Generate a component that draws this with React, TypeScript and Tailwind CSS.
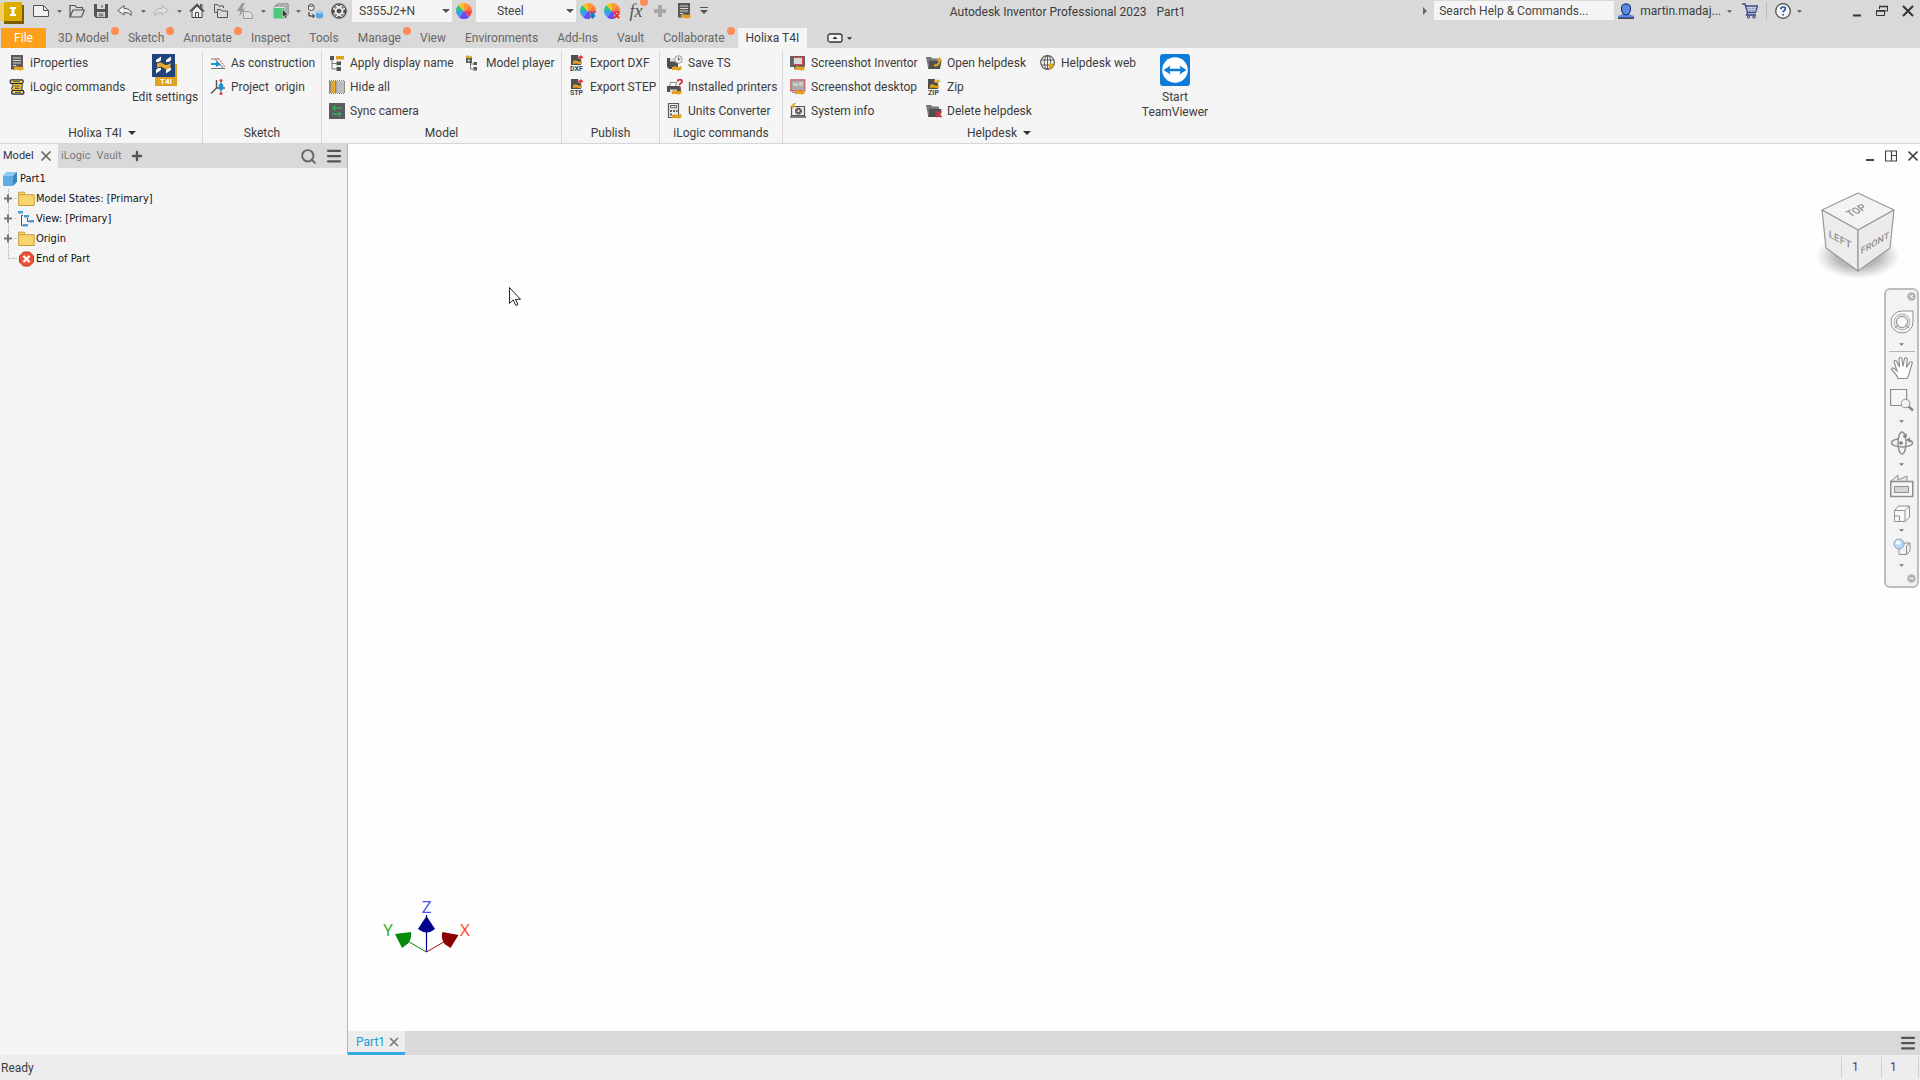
import React from 'react';
import { Plus, Search, Menu } from 'lucide-react';

type IconProps = { children: React.ReactNode; className?: string; box?: string };

function Svg({ children, className = 'size-4', box = '0 0 16 16' }: IconProps) {
  return (
    <svg viewBox={box} className={`shrink-0 ${className}`} fill="none" aria-hidden="true">
      {children}
    </svg>
  );
}

function Caret({ className = 'w-2 h-2', color = '#555' }: { className?: string; color?: string }) {
  return (
    <Svg box="0 0 8 8" className={className}>
      <path d="M0 2h8L4 6z" fill={color} />
    </Svg>
  );
}

const swoosh = <path d="M5 12.5q2-2 4.500-.8t5-.7v3.500q-2 1.500-5 .6T5 15.500z" fill="#e0a020" />;

// ---------- quick access icons ----------

const AppLogo = () => (
  <Svg box="0 0 24 24" className="size-6">
    <path d="M4 5h20v19H4z" fill="#7d5d00" />
    <path d="M0 3h5v18H0z" fill="#f0cf60" />
    <path d="M4 2h18v19H4z" fill="#dcab00" />
    <path d="M10 7h6v2h-1.500v5H16v2h-6v-2h1.500V9H10z" fill="#fff" />
  </Svg>
);

const NewFile = () => (
  <Svg box="0 0 18 16" className="w-[18px] h-4">
    <path d="M1.500 2.500h10l5 5v6h-15z" fill="#f2f2f2" stroke="#555" />
    <path d="M11.500 2.500v5h5" stroke="#555" />
  </Svg>
);

const OpenFolder = () => (
  <Svg>
    <path d="M1 14V2.500h5l1.500 2h6V7M1 14h11.500L15.500 7H4z" stroke="#555" strokeWidth="1.200" />
  </Svg>
);

const SaveDisk = () => (
  <Svg>
    <path d="M1 1h14v14H3l-2-2z" fill="#555" />
    <path d="M4 1h8v5H4zM4 9h8v5H4z" fill="#d9d9d9" />
    <path d="M5.500 11h5M5.500 12.800h5M9 2v3" stroke="#555" />
  </Svg>
);

const Undo = ({ faded = false }: { faded?: boolean }) => (
  <Svg className={faded ? 'size-4 -scale-x-100 opacity-30' : 'size-4'}>
    <path d="M7 2.500.8 7.500l6.200 4.500v-2.500q5.500-.5 7 3 1.500-4-2-6-2-1-5-1z" fill="#eee" stroke="#555" />
  </Svg>
);

const Home = () => (
  <Svg>
    <path d="M3 8 8 3l5 5v6.500H3z" fill="#f2f2f2" stroke="#444" />
    <path d="M.8 8.500 8 1.500l7.200 7" stroke="#444" strokeWidth="1.300" />
    <path d="M11.500 4V1.500H13v4" stroke="#444" />
    <path d="M6.500 14.500v-5h3v5" stroke="#444" />
  </Svg>
);

const Folders = () => (
  <Svg>
    <path d="M1.500 9.500v-8h3l1 1.500h5v2M4.500 14.500v-8h3l1 1.500h6v6.500zM1.500 9.500h3" stroke="#555" />
  </Svg>
);

const Lightning = () => (
  <Svg>
    <path d="M5 0 0 8h3.500L2 14l6-8.500H5L8 0z" fill="#999" />
    <path d="M6.500 8.500h6l3 3v4h-9z" fill="#ddd" stroke="#999" />
  </Svg>
);

const SelectCube = () => (
  <Svg>
    <path d="M1 4.500 4.500 1H15v11l-3 3" fill="#e6e6e6" stroke="#555" strokeWidth=".8" />
    <path d="M2.500 3h10.500v10" stroke="#555" strokeWidth=".8" />
    <path d="M.5 5h11v10.500H.5z" fill="#4cc97a" />
    <path d="m9.500 6 5.500 6h-2.300l1.300 3-1.500.6-1.300-3-1.700 1.400z" fill="#333" stroke="#eee" strokeWidth=".5" />
  </Svg>
);

const Convert = () => (
  <Svg>
    <path d="M1.500 2.500v4q2.500 2 5.500 0v-4M1.500 2.500q2.700-3 5.500 0-2.700 2-5.500 0" fill="#eee" stroke="#555" />
    <path d="M2 9v4h5M5.500 11l2 2-2 2" stroke="#222" />
    <path d="M9 9q3.500-2.500 7 0v5.500q-3.500 2-7 0z" fill="#5aa5dd" />
    <ellipse cx="12.500" cy="9.200" rx="3.500" ry="1.300" fill="#9fd0f2" />
  </Svg>
);

const Ball = () => (
  <Svg>
    <circle cx="8" cy="8" r="7.200" fill="#eee" stroke="#4a4a4a" strokeWidth="1.300" />
    <path d="m8 5.500 2.300 1.300v2.500L8 10.500 5.700 9.300V6.800z" fill="#4a4a4a" />
    <path d="M5 1.500 8 3.200l3-1.700M1 6l2.700 1v3L1.300 11M15 6l-2.700 1v3l2.400 1M5 14.800l3-2 3 2" fill="#4a4a4a" />
    <path d="m3 3.500 1.500-.8L6 4.500 4.500 6 3 5zM13 3.500l-1.500-.8L10 4.500 11.500 6 13 5zM3 12.500l.5-1.500L5 10.500l1.300 1.500L5 13.500zM13 12.500l-.5-1.500-1.500-.5L9.700 12l1.300 1.500z" fill="#888" />
  </Svg>
);

function Wheel({ mark }: { mark?: 'down' | 'x' }) {
  return (
    <Svg>
      <path d="M8 8V0a8 8 0 0 1 5.700 2.300z" fill="#ff9a2e" />
      <path d="M8 8 13.700 2.300A8 8 0 0 1 16 8z" fill="#ff7a3a" />
      <path d="M8 8h8a8 8 0 0 1-3 6.200z" fill="#f0414f" />
      <path d="m8 8 5 6.200A8 8 0 0 1 3 14.200z" fill="#6a4cf5" />
      <path d="m8 8-5 6.200A8 8 0 0 1 0 8z" fill="#3b9df0" />
      <path d="M8 8H0a8 8 0 0 1 2.300-5.700z" fill="#2fc285" />
      <path d="M8 8 2.300 2.300A8 8 0 0 1 8 0z" fill="#f2c22f" />
      {mark && <path d="M10 10h6v6h-6z" fill="#d9d9d9" />}
      {mark === 'down' && <path d="M10.500 9.500h4v3H16L12.500 16 9 12.500h1.500z" fill="#1679c9" />}
      {mark === 'x' && <path d="m10.200 10.200 5 5m0-5-5 5" stroke="#e0252d" strokeWidth="1.800" />}
    </Svg>
  );
}

const Page = () => (
  <Svg>
    <path d="M2 0h12v12H2z" fill="#5a5a5a" />
    <path d="M4 3h8M4 5.500h8M4 8h8M4 10.500h3" stroke="#d4d4d4" />
    <path d="M2 12h3v2.500H2z" fill="#5a5a5a" />
    {swoosh}
  </Svg>
);

// ---------- ribbon icons ----------

const Scroll = () => (
  <Svg>
    <path d="M2.500 4.500 4 6.500 2.500 9.500l1.500 3h10L12.500 9l1-2.500-1-2z" fill="#f3be2e" stroke="#1d2c4d" />
    <path d="M2 .8h11.500q1.500 1.800 0 3.700H2Q.2 2.600 2 .8zM3.500 11.500H14q1.800 1.900 0 3.700H3.500q-1.800-1.800 0-3.700z" fill="#f7cf55" stroke="#1d2c4d" strokeWidth="1.200" />
    <path d="M5.500 7h5M5.500 9.300h5M4 2.700h7M6 13.300h6" stroke="#1d2c4d" strokeWidth=".8" />
  </Svg>
);

const Construction = () => (
  <Svg>
    <path d="M1 4h8M1 13.500h14" stroke="#777" />
    <path d="m8 3 7 9" stroke="#d44" strokeDasharray="2 1" />
    <path d="m5 4 8 9" stroke="#777" />
    <path d="M1 8h5V6l5 3.500L6 12v-2H1z" fill="#1b95d3" />
  </Svg>
);

const Origin = () => (
  <Svg>
    <path d="M6.500 1v8M6.500 9 1 14.500M6.500 9H15" stroke="#555" strokeWidth="1.400" />
    <path d="M11 3v10M9 6l2-2 2 2-1 5h-2z" stroke="#1b95d3" fill="#1b95d3" />
    <circle cx="11" cy="1.500" r="1.500" fill="#dd3b3b" />
    <circle cx="11" cy="14.500" r="1.500" fill="#dd3b3b" />
  </Svg>
);

const TreeName = () => (
  <Svg>
    <path d="M1 1h4v4H1zM7.500 6.500H12v3.800H7.500zM7.500 12H12v4H7.500z" fill="#555" />
    <path d="M3 5v9h5M3 8.500h5" stroke="#777" />
    <path d="M7 1h8v3.500H7z" fill="#e0a020" />
  </Svg>
);

const HideAll = () => (
  <Svg>
    <path d="M0 1h16v14H0z" fill="#8b8b8b" />
    <path d="M2 2h4v12H2z" fill="#e5a823" />
    <path d="M7.500 2H15v12H7.500z" fill="#bdbdbd" />
    <path d="M1 1.500h15M1 14.500h15" stroke="#f5f5f5" strokeDasharray="1 1" />
  </Svg>
);

const SyncCamera = () => (
  <Svg>
    <path d="M0 0h16v16H0z" fill="#5c5c5c" />
    <path d="M13 5H4m2.500-2.500L4 5l2.500 2.500M3 11h9M9.500 8.500 12 11l-2.500 2.500" stroke="#2fae58" strokeWidth="1.300" />
  </Svg>
);

const Player = () => (
  <Svg>
    <path d="M1 1q2-1.500 3 0t3-.5V3H1z" fill="#e0a020" />
    <path d="M1 3h6v5H1zM8.500 7H12v3H8.500zM8.500 12H12v3.500H8.500z" fill="#5a5a5a" />
    <path d="m3 4 2.500 1.500L3 7z" fill="#ddd" />
    <path d="M5.500 8v6h3M5.500 9h3" stroke="#777" />
  </Svg>
);

function ExportIcon({ label, arrow = '#dd3340' }: { label: string; arrow?: string }) {
  return (
    <Svg className="size-4 overflow-visible">
      <path d="M2 0h7v3.500h3V10H2z" fill="#4d4d4d" />
      <path d="M8 1.500h3V0l3.500 2.300L11 4.500V3H8z" fill={arrow} />
      <path d="M4 6q2.500-1.500 4.500 0t4.500-.5v3q-1.500 1.200-4.200.3T4 9.500z" fill="#e0a020" />
      <text x="7.500" y="16" textAnchor="middle" fontSize="7" fontWeight="700" fill="#444" fontFamily="Roboto, sans-serif">{label}</text>
    </Svg>
  );
}

const SaveTs = () => (
  <Svg>
    <path d="M0 3h11v11H2l-2-2z" fill="#505050" />
    <path d="M3 3h5v3.500H3z" fill="#ddd" />
    <circle cx="11.500" cy="4.500" r="3.800" fill="#f0f0f0" stroke="#999" />
    <path d="M11.500 2v3l2-1" stroke="#666" />
    {swoosh}
  </Svg>
);

const Printer = () => (
  <Svg>
    <path d="M3.500 3.500h6l-1 4h-6z" fill="#fff" stroke="#888" />
    <path d="M0 7h13l1 3.500V13H0z" fill="#505050" />
    <path d="M3 10.500h7V14H3z" fill="#ddd" />
    <path d="M10.500 2.500q.2-2 2.300-2t2.200 2q0 1.200-1.500 2-.8.500-.8 1.500M12.700 7.500v2" stroke="#d82a3a" strokeWidth="1.800" />
    {swoosh}
  </Svg>
);

const Calculator = () => (
  <Svg>
    <path d="M1.500.5h10v14h-10z" fill="#eee" stroke="#5a5a5a" strokeWidth="1.200" />
    <path d="M3.500 2.500h6v2.300h-6z" stroke="#5a5a5a" />
    <path d="M3 7h2v2H3zM6 7h2v2H6zM9 7h1.500v2H9zM3 10.500h2v2H3z" fill="#5a5a5a" />
    {swoosh}
  </Svg>
);

const ShotInventor = () => (
  <Svg>
    <path d="M0 1h15v11H0zM4 12h6v2H4z" fill="#626262" />
    <path d="M3.500 2.500h9v7h-9z" fill="#d9d9d9" stroke="#d44" />
    {swoosh}
  </Svg>
);

const ShotDesktop = () => (
  <Svg>
    <path d="M.8.800h14v11H.8z" fill="#aaa" stroke="#cf5b5b" strokeWidth="1.200" />
    <path d="M2 13.500h8" stroke="#999" />
    <path d="M3 4h5v3H3zM9 3h4v4H9z" fill="#ccc" />
    {swoosh}
  </Svg>
);

const SystemInfo = () => (
  <Svg>
    <path d="M1.500 3.500h13v9h-13z" fill="#eee" stroke="#555" strokeWidth="1.200" />
    <path d="M0 14h16" stroke="#555" strokeWidth="1.500" />
    <circle cx="8.500" cy="8" r="2.700" stroke="#444" strokeWidth="1.800" strokeDasharray="1.600 .5" />
    <circle cx="8.500" cy="8" r="1.700" stroke="#444" />
    <path d="M4 0 0 4h2.500L1 7l4.500-4.500H3.500L6 0z" fill="#e0a020" />
  </Svg>
);

const HelpFolder = ({ remove = false }: { remove?: boolean }) => (
  <Svg>
    <path d="M0 2h5l1.500 1.500H13V6H3.500L2 12z" fill="#777" />
    <path d="M3 6h12.500L14 14H2z" fill="#505050" />
    {remove
      ? <path d="m10 8.500 5.500 5.500m0-5.500L10 14" stroke="#d8363f" strokeWidth="1.800" />
      : <path d="M8 9.500q4.500 0 4.500-4H10.500L13.500 2l3 3.500h-2q0 6-6.500 6z" fill="#e5a823" />}
  </Svg>
);

const Web = () => (
  <Svg>
    <circle cx="7.500" cy="7.500" r="6.800" stroke="#5a5a5a" strokeWidth="1.200" />
    <ellipse cx="7.500" cy="7.500" rx="3.200" ry="6.800" stroke="#5a5a5a" />
    <path d="M1 5h13M1 10h13M7.500 1v13" stroke="#5a5a5a" />
    <path d="M8.500 8.500h4.500v3.500l-1.500-.5-1 3.500-1.500-.5.500-3-1 .5z" fill="#e5a823" />
  </Svg>
);

const T4iLogo = () => (
  <Svg box="0 0 26 32" className="w-[26px] h-8">
    <path d="M3 10h22v22H3z" fill="#e0a020" />
    <path d="M0 0h23v23H0z" fill="#1f437d" />
    <path d="M4 8V6l5-3.500v3.800L6.500 8zM14 8V6l5-3.500v3.800L16.500 8zM4 19.500v-3.800L6.500 14H9v2zM14 19.500v-3.800l2.500-1.700H19v2z" fill="#fff" />
    <path d="M5 9.500q3.500-2 6.500.5t7-1v4.500q-4 3-7 .5T5 14z" fill="#f0a828" />
    <text x="14" y="30" textAnchor="middle" fontSize="8" fontWeight="700" fill="#fff" fontFamily="Roboto, sans-serif">T4I</text>
  </Svg>
);

const TeamViewer = () => (
  <Svg box="0 0 32 32" className="size-8">
    <rect x="1" y="0" width="30" height="32" rx="3" fill="#0d7cd9" />
    <circle cx="16" cy="16" r="12.800" fill="#fff" />
    <path d="m4.500 16 7-4.500-1 3.300h11l-1-3.300 7 4.500-7 4.500 1-3.300h-11l1 3.300z" fill="#0d7cd9" />
  </Svg>
);

// ---------- building blocks ----------

function QuickButton({ label, children }: { label: string; children: React.ReactNode }) {
  return (
    <button type="button" aria-label={label} className="relative flex h-[22px] w-6 items-center justify-center">
      {children}
    </button>
  );
}

function QuickCaret({ label, narrow = false }: { label: string; narrow?: boolean }) {
  return (
    <button type="button" aria-label={label} className={`flex h-[22px] items-center justify-center ${narrow ? 'w-2.5' : 'w-3'}`}>
      <Caret className="size-[5px]" />
    </button>
  );
}

function Cmd({ icon, label }: { icon: React.ReactNode; label: string }) {
  return (
    <button type="button" className="flex h-6 items-center gap-[5px] whitespace-nowrap">
      {icon}
      <span>{label}</span>
    </button>
  );
}

function Panel({ title, width, menu = false, last = false, children }: {
  title: string; width: string; menu?: boolean; last?: boolean; children: React.ReactNode;
}) {
  return (
    <section className={`flex shrink-0 flex-col ${last ? '' : 'border-r border-[#d6d6d6]'} ${width}`}>
      <div className="flex h-[72px] items-start pl-[7px]">{children}</div>
      <h2 className="flex h-5 items-center justify-center gap-1.5">
        {title}
        {menu && <Caret color="#333" />}
      </h2>
    </section>
  );
}

const tabs = [
  { name: '3D Model', dot: true },
  { name: 'Sketch', dot: true },
  { name: 'Annotate', dot: true },
  { name: 'Inspect' },
  { name: 'Tools' },
  { name: 'Manage', dot: true },
  { name: 'View' },
  { name: 'Environments' },
  { name: 'Add-Ins' },
  { name: 'Vault' },
  { name: 'Collaborate', dot: true },
];

function TitleBar() {
  return (
    <header className="flex h-6 items-start">
      <AppLogo />
      <div className="flex items-start pl-[5px]">
        <QuickButton label="New"><NewFile /></QuickButton>
        <QuickCaret label="New options" />
        <QuickButton label="Open"><OpenFolder /></QuickButton>
        <QuickButton label="Save"><SaveDisk /></QuickButton>
        <QuickButton label="Undo"><Undo /></QuickButton>
        <QuickCaret label="Undo options" />
        <QuickButton label="Redo"><Undo faded /></QuickButton>
        <QuickCaret label="Redo options" />
        <QuickButton label="Home"><Home /></QuickButton>
        <QuickButton label="Projects"><Folders /></QuickButton>
        <QuickButton label="Update"><Lightning /></QuickButton>
        <QuickCaret label="Update options" />
        <QuickButton label="Select"><SelectCube /></QuickButton>
        <QuickCaret label="Select options" narrow />
        <QuickButton label="Replace"><Convert /></QuickButton>
        <QuickButton label="Material"><Ball /></QuickButton>
        <div className="relative ml-px">
          <select aria-label="Material" className="block h-[22px] w-[100px] appearance-none bg-[#f5f5f5] pl-[7px] text-[#444]">
            <option>S355J2+N</option>
          </select>
          <span className="pointer-events-none absolute right-0.5 top-[7px]"><Caret /></span>
        </div>
        <QuickButton label="Appearance"><Wheel /></QuickButton>
        <div className="relative">
          <select aria-label="Appearance" className="block h-[22px] w-[100px] appearance-none bg-[#f5f5f5] pl-[21px] text-[#444]">
            <option>Steel</option>
          </select>
          <span className="pointer-events-none absolute right-0.5 top-[7px]"><Caret /></span>
        </div>
        <QuickButton label="Adjust"><Wheel mark="down" /></QuickButton>
        <QuickButton label="Clear"><Wheel mark="x" /></QuickButton>
        <QuickButton label="Parameters">
          <span className="font-['Liberation_Serif',serif] text-lg leading-none text-[#555] italic">fx</span>
          <span className="absolute -top-0.5 right-0 size-2 rounded-full bg-[#ff8c55]" />
        </QuickButton>
        <QuickButton label="Add">
          <Svg><path d="M6 2h4v4h4v4h-4v4H6v-4H2V6h4z" fill="#a8a8a8" /></Svg>
        </QuickButton>
        <QuickButton label="iProperties"><Page /></QuickButton>
        <button type="button" aria-label="Customize" className="flex h-[22px] w-4 items-center justify-center">
          <Svg box="0 0 8 8" className="size-2"><path d="M0 .5h8" stroke="#555" /><path d="M0 3h8L4 7z" fill="#555" /></Svg>
        </button>
      </div>

      <h1 className="flex h-6 flex-1 items-center justify-center gap-2.5 whitespace-nowrap">
        <span>Autodesk Inventor Professional 2023</span>
        <span>Part1</span>
      </h1>

      <div className="flex h-[22px] items-center">
        <Svg box="0 0 5 8" className="mr-1.5 h-2 w-[5px]"><path d="M0 0v8l4-4z" fill="#666" /></Svg>
        <input aria-label="Search Help & Commands" placeholder="Search Help & Commands..." className="mt-px h-[19px] w-[180px] self-start bg-[#f5f5f5] pl-[5px] placeholder:text-[#444]" />
        <button type="button" className="ml-1 flex items-center gap-1.5">
          <Svg>
            <path d="M0 15v-2q3-1 5-2-2-2-2-6 0-4.500 5-4.500T13 5q0 4-2 6 2 1 5 2v2z" fill="#5b8ae6" />
            <path d="M0 15.200h16" stroke="#222" strokeWidth="1.200" />
            <path d="M5 11q3 2 6 0M3.500 6q-.5-5 4.500-5t4.500 5q0 3-2 5M3.500 6q0 3 2 5" stroke="#1f2b55" />
          </Svg>
          <span>martin.madaj...</span>
          <Caret className="size-[5px]" />
        </button>
        <button type="button" aria-label="Store" className="ml-2.5">
          <Svg>
            <path d="M0 1h3l2.500 8.500h8L15.500 3H4M5.500 9.500 4.500 12H14" stroke="#35458a" strokeWidth="1.300" />
            <path d="M5 5.500h9M6 7.500h8M8 3v6M11 3v6" stroke="#8d97b8" strokeWidth=".7" />
            <circle cx="6.500" cy="14" r="1.200" stroke="#35458a" />
            <circle cx="12" cy="14" r="1.200" stroke="#35458a" />
          </Svg>
        </button>
        <span className="mx-2 h-[18px] w-px bg-[#bbb]" />
        <button type="button" aria-label="Help" className="mr-1.5 flex items-center gap-1.5">
          <Svg>
            <circle cx="8" cy="8" r="7.300" fill="#f4f4f4" stroke="#444" strokeWidth="1.200" />
            <path d="M5.800 6.300q0-2.300 2.300-2.300t2.200 2q0 1-1.200 1.800-1 .6-1 1.500M8.100 11v1.600" stroke="#2a4fa5" strokeWidth="1.700" />
          </Svg>
          <Caret className="size-[5px]" />
        </button>
        <div className="ml-11 flex items-center gap-3.5 pr-1.5">
          <button type="button" aria-label="Minimize"><Svg box="0 0 10 12" className="h-3 w-2.5"><path d="M1 10.500h8" stroke="#333" strokeWidth="2" /></Svg></button>
          <button type="button" aria-label="Restore"><Svg box="0 0 12 12" className="size-3"><path d="M3.500 4V1.500h8V6H8M.5 5.500h8v5h-8z" stroke="#333" /><path d="M3 1.500h9M0 6h9" stroke="#333" strokeWidth="1.500" /></Svg></button>
          <button type="button" aria-label="Close"><Svg box="0 0 12 12" className="size-3"><path d="m1 1 10 10M11 1 1 11" stroke="#333" strokeWidth="2" /></Svg></button>
        </div>
      </div>
    </header>
  );
}

function Ribbon() {
  return (
    <div className="flex h-24 border-b border-[#d6d6d6] bg-[#f5f5f5] pt-[3px] pl-0.5">
      <Panel title="Holixa T4I" width="w-[201px]" menu>
        <div className="flex w-[124px] flex-col">
          <Cmd icon={<Page />} label="iProperties" />
          <Cmd icon={<Scroll />} label="iLogic commands" />
        </div>
        <button type="button" className="flex w-16 flex-col items-center gap-1 pt-[3px] whitespace-nowrap">
          <T4iLogo />
          <span className="leading-[15px]">Edit settings</span>
        </button>
      </Panel>
      <Panel title="Sketch" width="w-[119px]">
        <div className="flex flex-col">
          <Cmd icon={<Construction />} label="As construction" />
          <Cmd icon={<Origin />} label={'Project\u00a0 origin'} />
        </div>
      </Panel>
      <Panel title="Model" width="w-[240px]">
        <div className="flex w-[136px] flex-col">
          <Cmd icon={<TreeName />} label="Apply display name" />
          <Cmd icon={<HideAll />} label="Hide all" />
          <Cmd icon={<SyncCamera />} label="Sync camera" />
        </div>
        <Cmd icon={<Player />} label="Model player" />
      </Panel>
      <Panel title="Publish" width="w-[98px]">
        <div className="flex flex-col">
          <Cmd icon={<ExportIcon label="DXF" />} label="Export DXF" />
          <Cmd icon={<ExportIcon label="STP" />} label="Export STEP" />
        </div>
      </Panel>
      <Panel title="iLogic commands" width="w-[123px]">
        <div className="flex flex-col">
          <Cmd icon={<SaveTs />} label="Save TS" />
          <Cmd icon={<Printer />} label="Installed printers" />
          <Cmd icon={<Calculator />} label="Units Converter" />
        </div>
      </Panel>
      <Panel title="Helpdesk" width="w-[432px]" menu last>
        <div className="flex w-[136px] flex-col">
          <Cmd icon={<ShotInventor />} label="Screenshot Inventor" />
          <Cmd icon={<ShotDesktop />} label="Screenshot desktop" />
          <Cmd icon={<SystemInfo />} label="System info" />
        </div>
        <div className="flex w-[114px] flex-col">
          <Cmd icon={<HelpFolder />} label="Open helpdesk" />
          <Cmd icon={<ExportIcon label="ZIP" arrow="#e5a823" />} label="Zip" />
          <Cmd icon={<HelpFolder remove />} label="Delete helpdesk" />
        </div>
        <div className="w-[98px]">
          <Cmd icon={<Web />} label="Helpdesk web" />
        </div>
        <button type="button" className="flex w-[74px] flex-col items-center gap-1 pt-[3px] leading-[15px]">
          <TeamViewer />
          <span>Start TeamViewer</span>
        </button>
      </Panel>
    </div>
  );
}

// ---------- browser panel ----------

const Folder = () => (
  <Svg box="0 0 17 16" className="h-4 w-[17px]">
    <path d="M.7 3.700v-2.500h6v2.500h9.500v10.800H.7z" fill="#f6d56a" stroke="#c79a3c" />
    <path d="M.7 3.700h6" stroke="#c79a3c" />
  </Svg>
);

const ViewTree = () => (
  <Svg box="0 0 17 16" className="h-4 w-[17px]">
    <path d="M5 4.500H3.500v10H5M9.500 7v3.500H11" stroke="#555" />
    <path d="M0 0h5v2.500H0zM6 4h5v2.500H6zM11 9h5v2.500h-5zM5 13h5v2.500H5z" fill="#4b9bd6" />
  </Svg>
);

const EndOfPart = () => (
  <Svg box="0 0 17 16" className="h-4 w-[17px]">
    <path d="M5.500 1h6l4 4v6l-4 4h-6l-4-4V5z" fill="#ee5138" stroke="#c0392b" />
    <path d="m5.500 5 6 6m0-6-6 6" stroke="#fff" strokeWidth="2.400" />
  </Svg>
);

const nodes = [
  { label: 'Model States: [Primary]', icon: <Folder />, open: true },
  { label: 'View: [Primary]', icon: <ViewTree />, open: true },
  { label: 'Origin', icon: <Folder />, open: true },
  { label: 'End of Part', icon: <EndOfPart />, open: false },
];

function BrowserPanel() {
  return (
    <aside className="flex w-[348px] shrink-0 flex-col border-r border-[#b5b5b5] bg-[#f4f4f4] font-['DejaVu_Sans_Condensed','Noto_Sans',sans-serif] text-[11px]">
      <div className="flex h-6 items-center bg-[#d9d9d9] font-['Roboto',sans-serif] text-[#7b7b7b]">
        <div className="flex h-6 w-[58px] items-center justify-between bg-[#f4f4f4] pr-1.5 pl-[3px] text-[#333348]">
          <button type="button">Model</button>
          <button type="button" aria-label="Close Model">
            <Svg box="0 0 12 12" className="size-3"><path d="m1.500 1.500 9 9M10.500 1.500l-9 9" stroke="#666" strokeWidth="1.700" /></Svg>
          </button>
        </div>
        <button type="button" className="ml-[3px]">iLogic</button>
        <button type="button" className="ml-1.5">Vault</button>
        <button type="button" aria-label="Add panel" className="ml-2"><Plus size={14} strokeWidth={4} color="#555" /></button>
        <div className="ml-auto flex items-center gap-2 pr-1">
          <button type="button" aria-label="Search"><Search size={17} strokeWidth={2.800} color="#666" /></button>
          <button type="button" aria-label="Menu"><Menu size={18} strokeWidth={3} color="#555" /></button>
        </div>
      </div>
      <ul className="pt-px text-[#111]">
        <li className="flex h-5 items-center gap-[3px] pl-[3px]">
          <Svg box="0 0 14 14" className="size-3.5">
            <path d="M0 3.500h10V14H0z" fill="#62ace6" />
            <path d="M0 3.500 3.500 0H14l-4 3.500z" fill="#8ccbf5" />
            <path d="M10 3.500 14 0v10l-4 4z" fill="#3c86c6" />
          </Svg>
          Part1
        </li>
        {nodes.map((n, i) => (
          <li key={n.label} className="flex h-5 items-center gap-px">
            <Svg box="0 0 17 20" className="h-5 w-[17px]">
              <path d={i === nodes.length - 1 ? 'M8.500 0v10' : 'M8.500 0v20'} stroke="#aaa" strokeDasharray="1 1" />
              <path d="M8.500 9.500H17" stroke="#aaa" strokeDasharray="1 1" />
              {n.open && <path d="M3 5h11v9H3z" fill="#f4f4f4" />}
              {n.open && <path d="M8 5.500v8M4 9.500h8" stroke="#777" strokeWidth="2" />}
            </Svg>
            {n.icon}
            <span className="whitespace-nowrap">{n.label}</span>
          </li>
        ))}
      </ul>
    </aside>
  );
}

// ---------- canvas ----------

function ViewCube() {
  return (
    <svg viewBox="0 0 90 95" className="absolute top-[44px] right-[17px] h-[95px] w-[90px]" fontFamily="Roboto, sans-serif">
      <defs>
        <radialGradient id="shade">
          <stop offset="0.500" stopColor="#888" stopOpacity="0.600" />
          <stop offset="1" stopColor="#999" stopOpacity="0" />
        </radialGradient>
      </defs>
      <ellipse cx="45" cy="68" rx="42" ry="23" fill="url(#shade)" />
      <g stroke="#999" strokeWidth="1.200" strokeLinejoin="round">
        <path d="M45 5 81 22 45 42 9 22z" fill="#f3f3f3" />
        <path d="M9 22 45 42v41L13 60z" fill="#ececec" />
        <path d="M81 22 45 42v41l32-23z" fill="#ebebeb" />
      </g>
      <g fill="#8f8f8f" fontSize="10" fontWeight="500" textAnchor="middle">
        <text transform="translate(46 25) rotate(-27) skewX(20)">TOP</text>
        <text transform="translate(27 55) skewY(28)">LEFT</text>
        <text transform="translate(62 58) skewY(-30)" fontSize="9">FRONT</text>
      </g>
    </svg>
  );
}

const navStroke = '#8c9094';

function NavCaret() {
  return <Caret className="size-[5px]" color="#777" />;
}

function NavBar() {
  return (
    <nav aria-label="Navigation" className="absolute top-[144px] right-px flex h-[300px] w-[35px] flex-col items-center rounded-md border-2 border-[#bdbdbd] bg-[#f3f3f3]">
      <button type="button" aria-label="Close bar" className="mt-[2px] mr-px self-end">
        <Svg box="0 0 9 9" className="size-[9px]"><circle cx="4.500" cy="4.500" r="4.300" fill="#b5b5b5" /><path d="m3 3 3 3m0-3L3 6" stroke="#fff" /></Svg>
      </button>
      <button type="button" aria-label="Wheel" className="mt-[9px]">
        <Svg box="0 0 24 24" className="size-6">
          <path d="M12 1h11v11A11 11 0 1 1 12 1z" fill="#fafafa" stroke={navStroke} />
          <circle cx="12" cy="12" r="8" fill="#e3e3e3" stroke={navStroke} strokeWidth=".6" />
          <circle cx="12" cy="12" r="5.500" fill="#fafafa" stroke={navStroke} />
          <path d="m5 18 3.500-3M19 18l-3.500-3" stroke={navStroke} />
        </Svg>
      </button>
      <div className="mt-2 mb-1"><NavCaret /></div>
      <hr className="w-[26px] border-[#b5b5b5]" />
      <button type="button" aria-label="Pan" className="mt-1">
        <Svg box="0 0 24 24" className="size-6">
          <path d="M8 22.500Q7 19 1.500 13.500q0-2.500 2.500-1L7 15 4 5.500q.8-2 2.500-.3L9.500 11 9 2.500q1.300-2 2.800 0L13 10.500 14.500 2.500q1.700-1.500 2.700.5L16.500 11.500 20 6q1.800-.8 2.300.8L19.500 16q-.5 4-2.500 6.500z" fill="#fff" stroke={navStroke} strokeWidth="1.200" />
        </Svg>
      </button>
      <button type="button" aria-label="Zoom" className="mt-2">
        <Svg box="0 0 24 24" className="size-6">
          <path d="M.6 1.500h16v16H.6z" fill="#f6f6f6" stroke={navStroke} strokeWidth="1.200" />
          <path d="m18.500 18.500 4.500 4" stroke="#888" strokeWidth="2.500" />
          <circle cx="15.500" cy="15.500" r="4.300" fill="#f3f3f3" stroke={navStroke} />
        </Svg>
      </button>
      <div className="my-[7px]"><NavCaret /></div>
      <button type="button" aria-label="Orbit">
        <Svg box="0 0 24 24" className="size-6">
          <ellipse cx="12" cy="12" rx="4" ry="11" stroke={navStroke} strokeWidth="1.500" />
          <path d="M8 8Q1.500 9 1.500 12t10.500 4q10.500-.5 10.500-4 0-2.500-5-3.500" stroke={navStroke} strokeWidth="1.500" />
          <path d="M13 5.500h3v-3M20 7l-2.500 2 3 2M9 12h4M11 10v4" stroke="#777" strokeWidth="1.300" />
        </Svg>
      </button>
      <div className="my-[7px]"><NavCaret /></div>
      <button type="button" aria-label="Look at">
        <Svg box="0 0 24 24" className="size-6">
          <path d="m1 7 7-6v5l9-4v5" fill="#e5e5e5" stroke={navStroke} />
          <path d="M.8 7.500h22v15H.8z" fill="#f4f4f4" stroke={navStroke} strokeWidth="1.500" />
          <path d="M4.500 12.500h14v6h-14z" fill="#d5d5d5" stroke={navStroke} />
        </Svg>
      </button>
      <button type="button" aria-label="View face" className="mt-[7px]">
        <Svg box="0 0 18 18" className="size-[18px]">
          <path d="M1.500 5.500 5.500 1h11v11L12 16.500H1.500zM1.500 5.500H12v11M12 5.500 16.500 1M1.500 11h5v5.500" fill="#f8f8f8" stroke={navStroke} />
        </Svg>
      </button>
      <div className="my-[5px]"><NavCaret /></div>
      <button type="button" aria-label="Visual style">
        <Svg box="0 0 18 18" className="size-[18px]">
          <path d="M6 7.500 9 5h8v8l-3.500 3.500H6z" fill="#f0f0f0" stroke={navStroke} />
          <path d="M13.500 16.500V8L17 5" stroke={navStroke} />
          <circle cx="6" cy="6" r="5" fill="#bcd8ef" stroke="#7fa8cc" />
          <ellipse cx="5" cy="4.500" rx="2.500" ry="2" fill="#f2f9ff" />
        </Svg>
      </button>
      <div className="mt-[7px]"><NavCaret /></div>
      <button type="button" aria-label="Bar options" className="mt-auto mr-px mb-[3px] self-end">
        <Svg box="0 0 9 9" className="size-[9px]"><circle cx="4.500" cy="4.500" r="4.300" fill="#b5b5b5" /><path d="M2.500 4.500h4" stroke="#fff" /></Svg>
      </button>
    </nav>
  );
}

function AxisTriad() {
  return (
    <svg viewBox="0 0 90 60" className="absolute bottom-[76px] left-[34px] h-[60px] w-[90px]" fontFamily="Open Sans, sans-serif" fontSize="17">
      <path d="M44.500 57V20" stroke="#00008b" strokeWidth="1.200" />
      <path d="M44.500 57 22 44" stroke="#0a8a0a" />
      <path d="m44.500 57 24-14" stroke="#a01010" />
      <path d="M44.500 21 53 34q-8 7-17 0z" fill="#00008b" />
      <path d="m13 39 16-2q1 7-3 11.500l-6 4.500z" fill="#0a8a0a" />
      <path d="m76.500 40-16-3q-2 6 2 12l6 4z" fill="#8b0000" />
      <text x="44.500" y="18" textAnchor="middle" fill="#4a4af0">Z</text>
      <text x="6" y="41" textAnchor="middle" fill="#22b022">Y</text>
      <text x="83" y="41" textAnchor="middle" fill="#ff4422">X</text>
    </svg>
  );
}

function Viewport() {
  return (
    <main className="flex min-w-0 flex-1 flex-col bg-[#fefefe]">
      <div className="relative flex-1">
        <div className="absolute top-1.5 right-0.5 flex items-center gap-[11px]">
          <button type="button" aria-label="Minimize document"><Svg box="0 0 8 12" className="h-3 w-2"><path d="M0 10h8" stroke="#444" strokeWidth="2" /></Svg></button>
          <button type="button" aria-label="Tile document"><Svg box="0 0 12 12" className="size-3"><path d="M.5 1h11v10H.5zM6.500 1v10M6.500 5.500h5" stroke="#444" strokeWidth="1.200" /></Svg></button>
          <button type="button" aria-label="Close document"><Svg box="0 0 10 12" className="h-3 w-2.5"><path d="m.5 1.500 9 9M9.500 1.500l-9 9" stroke="#444" strokeWidth="1.600" /></Svg></button>
        </div>
        <ViewCube />
        <NavBar />
        <AxisTriad />
        <svg viewBox="0 0 12 19" className="absolute top-[143px] left-[161px] h-[19px] w-3">
          <path d="M.5.500v16l3.700-3.600 2.600 5.600 2.200-1-2.500-5.200h5z" fill="#fff" stroke="#222" />
        </svg>
      </div>
      <div className="flex h-6 items-center justify-between bg-[#d9d9d9]">
        <div className="flex h-6 w-[57px] items-center justify-between border-b-3 border-[#38a9df] bg-[#ededed] pr-1.5 pl-2 text-[#189cd3]">
          <button type="button">Part1</button>
          <button type="button" aria-label="Close Part1">
            <Svg box="0 0 10 10" className="size-2.5"><path d="m1 1 8 8M9 1 1 9" stroke="#777" strokeWidth="1.600" /></Svg>
          </button>
        </div>
        <button type="button" aria-label="Document list" className="mr-[3px]"><Menu size={18} strokeWidth={3} color="#555" /></button>
      </div>
    </main>
  );
}

export default function App() {
  return (
    <div className="flex min-h-screen flex-col bg-[#d9d9d9] font-['Roboto',sans-serif] text-[12px] leading-4 text-[#3c3c3c]">
      <TitleBar />
      <div role="tablist" className="flex h-6 items-end whitespace-nowrap text-[#686868]">
        <button type="button" role="tab" className="mr-0.5 ml-px h-5 w-[45px] bg-[#ffa01c] text-white">File</button>
        {tabs.map((t) => (
          <button key={t.name} type="button" role="tab" className="relative h-5 pr-[9px] pl-2.5">
            {t.name}
            {t.dot && <span className="absolute -top-px -right-px size-2 rounded-full bg-[#ff8c55]" />}
          </button>
        ))}
        <button type="button" role="tab" aria-selected="true" className="ml-1 h-5 bg-[#f5f5f5] px-2 text-[#3c3c3c]">Holixa T4I</button>
        <button type="button" aria-label="Ribbon display" className="ml-5 flex h-5 items-center gap-1">
          <Svg box="0 0 16 10" className="h-2.5 w-4"><rect x="1" y="1" width="14" height="8" rx="2" fill="#f5f5f5" stroke="#333" strokeWidth="1.300" /><path d="M5.500 6h5L8 3.500z" fill="#222" /></Svg>
          <Caret className="size-[5px]" color="#222" />
        </button>
      </div>
      <Ribbon />
      <div className="flex flex-1">
        <BrowserPanel />
        <Viewport />
      </div>
      <footer className="flex h-[25px] items-center bg-[#ededed] pr-px">
        <span className="mr-auto pl-px">Ready</span>
        <span className="h-[21px] w-10 border-l border-[#d0d0d0] pl-2.5 leading-[20px] text-[#6b2a8a]">1</span>
        <span className="h-[21px] w-[38px] border-x border-[#d0d0d0] pl-2 leading-[20px] text-[#6b2a8a]">1</span>
      </footer>
    </div>
  );
}
